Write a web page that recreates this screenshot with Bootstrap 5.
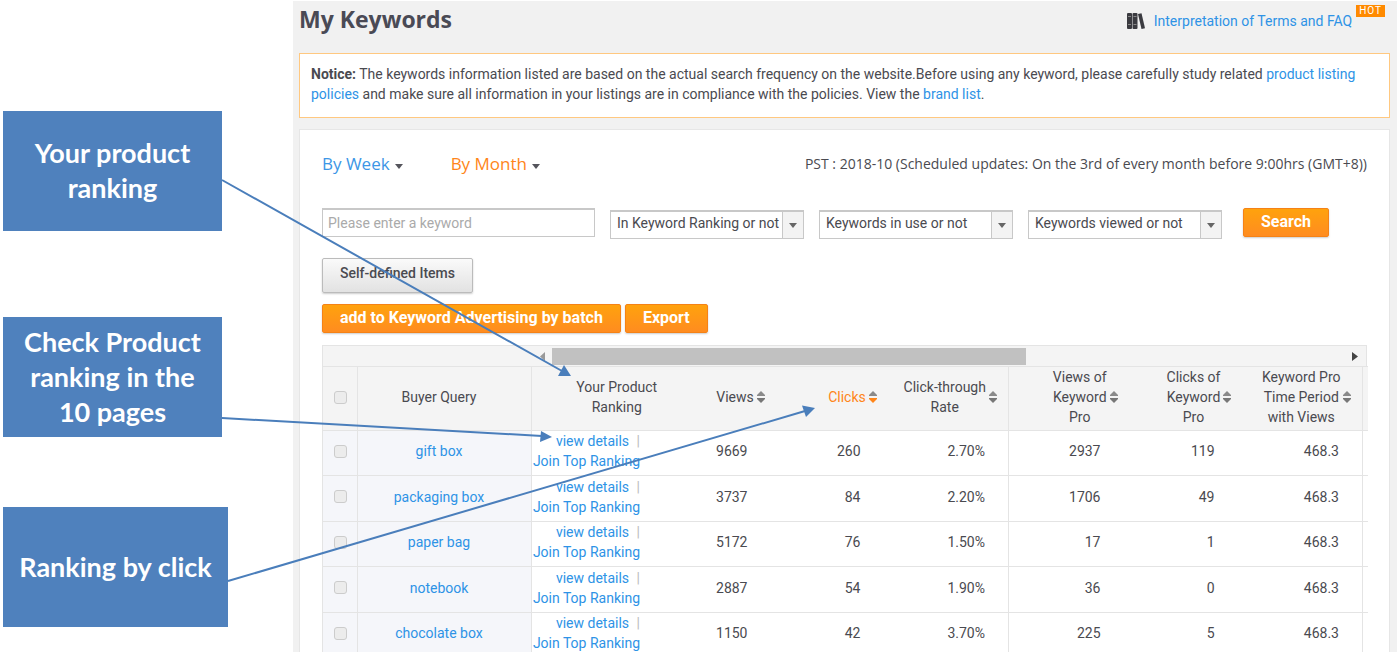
<!DOCTYPE html>
<html lang="en">
<head>
<meta charset="utf-8">
<meta name="viewport" content="width=device-width, initial-scale=1">
<title>My Keywords</title>
<link href="https://cdn.jsdelivr.net/npm/bootstrap@5.3.0/dist/css/bootstrap.min.css" rel="stylesheet">
<style>
body{font-family:Roboto,"Liberation Sans",sans-serif;font-size:14px;line-height:20px;color:#4a4a50;background:#fff;overflow-x:hidden}
a{color:#2e93e6;text-decoration:none}
.guide{position:relative;overflow:hidden;height:100vh}
.rail{width:293px;padding:111px 0 0 3px}
.callout-box{width:219px;height:120px;background:#4f81bd;color:#fff;font:bold 27px/35px Lato,sans-serif;margin-bottom:86px;padding-bottom:2px}
.callout-box.second{margin-bottom:70px}
.callout-box.wide{width:225px}
.pointers{left:0;top:0;pointer-events:none}
.workspace{background:#f1f1f1;margin-top:1px;padding:0 7px 0 6px;min-width:0}
.topbar{height:52px}
.page-title{font:bold 23px/36px "Open Sans","Noto Sans",sans-serif;color:#4a4a55}
.faq{padding:10px 5px 0 0}
.books{margin:2px 9px 0 0}
.hot{background:#ff8a00;color:#fff;font-size:10px;line-height:12px;padding:0 3px;margin-top:-6px;letter-spacing:1px}
.site-notice{background:#fff;border:1px solid #ffc880;padding:10px 11px;height:65px}
.panel{background:#fff;border:1px solid #e6e6e6;margin-top:11px;padding:20px 22px 0}
.period{height:28px}
.tab-btn{border:0;background:none;padding:0;font:17px/28px "Open Sans","Noto Sans",sans-serif;color:#3c96e6}
.tab-btn.active{color:#ff8519}
.tab-btn::after{content:"";display:inline-block;border:4px solid transparent;border-top:5px solid #55555c;border-bottom:0;margin-left:5px;vertical-align:1px}
.schedule{font-family:"Open Sans","Noto Sans",sans-serif}
.filters{margin-top:30px}
.field{height:29px;border:1px solid #c8c8c8;border-top-width:2px;border-radius:0;padding:0 5px;font-size:14px;color:#4a4a50}
.field::placeholder{color:#aaa}
.query{width:273px;margin-right:15px}
.pick{appearance:none;height:29px;border:1px solid #c8c8c8;border-top-width:2px;border-radius:0;padding:0 20px 4px 6px;color:#4a4a50;width:194px;margin:2px 15px 0 0;
background:url("data:image/svg+xml,%3Csvg xmlns='http://www.w3.org/2000/svg' width='21' height='27'%3E%3Cpath fill='%23f3f3f3' d='M0 0h21v27H0z'/%3E%3Cpath fill='%23c8c8c8' d='M0 0h1v27H0z'/%3E%3Cpath fill='%23666' d='M7 11h8l-4 5z'/%3E%3C/svg%3E") right top no-repeat #fff}
.act{height:29px;border:1px solid #f58216;border-radius:2px;background:linear-gradient(#ffa20d,#ff8c20);color:#fff;font-weight:bold;font-size:16px;line-height:24px;padding:0 17px 2px;box-shadow:0 1px 2px #ccc}
.search{margin-left:6px}
.plain{height:35px;border:1px solid #bbb;border-radius:2px;background:linear-gradient(#fafafa,#e2e2e2);color:#4a4a50;font-weight:500;padding:0 17px 6px;box-shadow:0 1px 2px #ccc}
.custom{margin-top:19px}
.batch{margin-top:11px}
.scroller{height:21px;border:1px solid #e4e4e4;border-bottom:0;margin-top:12px;background:#f4f4f4}
.frozen{width:20%}
.thumb{background:#c1c1c1;height:17px;width:58%;margin-left:7px}
.grid{table-layout:fixed;width:100%;border:1px solid #e4e4e4;border-right:0;margin:0}
.grid th{background:#f4f4f4;font-weight:400;text-align:center;height:63px;padding:0 0 3px;border:1px solid #e4e4e4;border-width:1px 0}
.grid td{height:45px;padding:0 0 4px;border-bottom:1px solid #e4e4e4;text-align:right}
.grid tr:nth-child(even) td{height:46px}
.grid .pin{background:#f5f6fa;border-right:1px solid #e4e4e4;text-align:center}
.grid .name{padding-right:11px}
.grid th.pin{background:#f4f4f4}
.grid .edge{border-right:1px solid #e4e4e4}
.grid .far{padding-right:32px}
.grid .kw{padding-right:37px}
.grid .near{padding-right:23px}
.links{width:108px}
.bar{color:#bbb;margin-left:4px}
.tick{appearance:none;width:13px;height:13px;border:1px solid #ccc;border-radius:3px;background:#ececec;display:block;margin:0 auto}
.orange{color:#ff8519}
</style>
</head>
<body>
<div class="guide d-flex">
  <aside class="rail flex-shrink-0">
    <div class="callout-box d-flex align-items-center justify-content-center text-center">Your product<br>ranking</div>
    <div class="callout-box second d-flex align-items-center justify-content-center text-center">Check Product<br>ranking in the<br>10 pages</div>
    <div class="callout-box wide d-flex align-items-center justify-content-center text-center">Ranking by click</div>
  </aside>

  <main class="workspace flex-grow-1">
    <header class="topbar d-flex justify-content-between align-items-start">
      <h1 class="page-title m-0">My Keywords</h1>
      <div class="faq d-flex">
        <svg width="18" height="17" viewBox="0 0 18 17" class="books" aria-hidden="true"><g fill="#3b3b40"><rect width="5" height="16" rx="1"/><rect x="5.500" width="5" height="16" rx="1"/><path d="M11 1 14.500 0.300 18 15.300 14.500 16z"/></g><path d="M1 3.500h3M1 11.500h3M6.500 3.500h3M6.500 11.500h3" stroke="#888"/></svg>
        <a href="#">Interpretation of Terms and FAQ</a>
        <span class="hot align-self-start ms-1">HOT</span>
      </div>
    </header>

    <div class="site-notice"><strong>Notice:</strong> The keywords information listed are based on the actual search frequency on the website.Before using any keyword, please carefully study related <a href="#">product listing policies</a> and make sure all information in your listings are in compliance with the policies. View the <a href="#">brand list</a>.</div>

    <section class="panel">
      <div class="period d-flex align-items-center">
        <button type="button" class="tab-btn me-5">By Week</button>
        <button type="button" class="tab-btn active">By Month</button>
        <span class="schedule ms-auto">PST : 2018-10 (Scheduled updates: On the 3rd of every month before 9:00hrs (GMT+8))</span>
      </div>

      <form class="filters d-flex align-items-start">
        <input type="text" class="field query" placeholder="Please enter a keyword" aria-label="Keyword">
        <select class="pick" aria-label="Keyword ranking"><option>In Keyword Ranking or not</option></select>
        <select class="pick" aria-label="Keywords in use"><option>Keywords in use or not</option></select>
        <select class="pick" aria-label="Keywords viewed"><option>Keywords viewed or not</option></select>
        <button type="button" class="act search">Search</button>
      </form>
      <div class="custom"><button type="button" class="plain d-block">Self-defined Items</button></div>
      <div class="d-flex gap-1 batch">
        <button type="button" class="act">add to Keyword Advertising by batch</button>
        <button type="button" class="act">Export</button>
      </div>

      <div class="scroller d-flex">
        <div class="frozen flex-shrink-0"></div>
        <div class="flex-grow-1 d-flex align-items-center px-2">
          <svg width="5" height="9" aria-hidden="true"><path d="M5 0v9L0 4.500z" fill="#999"/></svg>
          <div class="thumb"></div>
          <svg class="ms-auto" width="6" height="9" aria-hidden="true"><path d="M0 0v9l6-4.500z" fill="#444"/></svg>
        </div>
      </div>
      <table class="grid">
        <colgroup><col style="width:35px"><col style="width:174px"><col style="width:170px"><col style="width:78px"><col style="width:113px"><col style="width:116px"><col style="width:129px"><col style="width:114px"><col style="width:111px"><col style="width:5px"></colgroup>
        <thead><tr id="heads"></tr></thead>
        <tbody id="rows"></tbody>
      </table>
    </section>
  </main>

  <svg class="pointers position-absolute" width="820" height="600" aria-hidden="true">
    <g stroke="#4a7ebb" stroke-width="2" fill="none"><path d="M222 180 562 371M222 418 542 436M228 581 805 411"/></g>
    <g fill="#4a7ebb"><path d="M571 376 564 365 558 376z"/><path d="M552 437 541 431 540 442z"/><path d="M815 408 802 405.500 806 417z"/></g>
  </svg>
</div>
<script>
const arrows = down => `<svg width="8" height="12" viewBox="0 0 8 12" class="flex-shrink-0" aria-hidden="true"><path d="M4 0 8 4v1H0V4z" fill="#8a8a8a"/><path d="M4 12 0 8V7h8v1z" fill="${down}"/></svg>`;
const head = (label, cls = '', down = '#777', pad = 0, gap = 3) =>
  `<th class="${cls}" style="padding-left:${pad}px"><div class="d-flex align-items-center justify-content-center" style="gap:${gap}px"><span>${label}</span>${arrows(down)}</div></th>`;
document.getElementById('heads').innerHTML =
  '<th class="pin"><input type="checkbox" class="tick" aria-label="Select all"></th><th class="pin name">Buyer Query</th><th>Your Product<br>Ranking</th>' +
  head('Views') + head('Clicks', 'orange', '#ff8519', 33) + head('Click-through<br>Rate', 'edge') +
  head('Views of<br>Keyword<br>Pro', '', '#777', 24) + head('Clicks of<br>Keyword<br>Pro', '', '#777', 9) +
  head('Keyword Pro<br>Time Period<br>with Views', 'edge') + '<th></th>';
const data = [
  ['gift box', 9669, 260, '2.70%', 2937, 119], ['packaging box', 3737, 84, '2.20%', 1706, 49],
  ['paper bag', 5172, 76, '1.50%', 17, 1], ['notebook', 2887, 54, '1.90%', 36, 0],
  ['chocolate box', 1150, 42, '3.70%', 225, 5]];
document.getElementById('rows').innerHTML = data.map(r => `<tr>
  <td class="pin"><input type="checkbox" class="tick" aria-label="${r[0]}"></td>
  <td class="pin name"><a href="#">${r[0]}</a></td>
  <td><div class="links"><a href="#">view details</a> <span class="bar">|</span><br><a href="#">Join Top Ranking</a></div></td>
  <td class="far">${r[1]}</td><td class="far">${r[2]}</td><td class="near edge">${r[3]}</td>
  <td class="kw">${r[4]}</td><td class="kw">${r[5]}</td><td class="near edge">468.3</td><td></td></tr>`).join('');
</script>
<script src="https://cdn.jsdelivr.net/npm/bootstrap@5.3.0/dist/js/bootstrap.bundle.min.js"></script>
</body>
</html>
